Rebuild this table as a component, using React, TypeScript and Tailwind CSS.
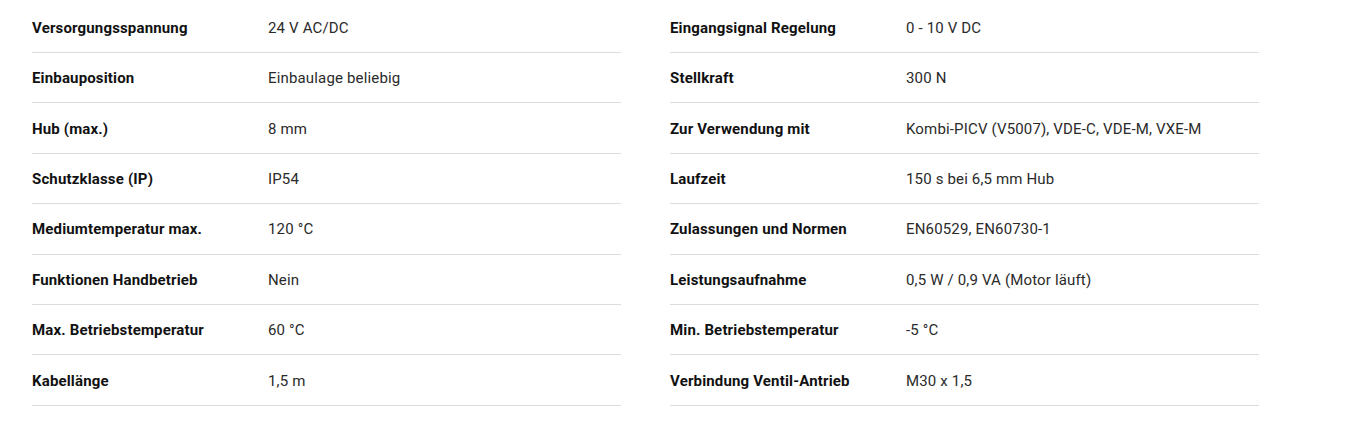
import React from "react";

const left: [string, string][] = [
  ["Versorgungsspannung", "24 V AC/DC"],
  ["Einbauposition", "Einbaulage beliebig"],
  ["Hub (max.)", "8 mm"],
  ["Schutzklasse (IP)", "IP54"],
  ["Mediumtemperatur max.", "120 °C"],
  ["Funktionen Handbetrieb", "Nein"],
  ["Max. Betriebstemperatur", "60 °C"],
  ["Kabellänge", "1,5 m"],
];

const right: [string, string][] = [
  ["Eingangsignal Regelung", "0 - 10 V DC"],
  ["Stellkraft", "300 N"],
  ["Zur Verwendung mit", "Kombi-PICV (V5007), VDE-C, VDE-M, VXE-M"],
  ["Laufzeit", "150 s bei 6,5 mm Hub"],
  ["Zulassungen und Normen", "EN60529, EN60730-1"],
  ["Leistungsaufnahme", "0,5 W / 0,9 VA (Motor läuft)"],
  ["Min. Betriebstemperatur", "-5 °C"],
  ["Verbindung Ventil-Antrieb", "M30 x 1,5"],
];

function Column({ rows }: { rows: [string, string][] }) {
  return (
    <div className="flex w-[589px] flex-col">
      {rows.map(([k, v]) => (
        <div
          key={k}
          className="flex h-[50.43px] items-center border-b border-[#dcdcdc] pt-[1px] text-[15px] leading-[20px] tracking-[0.16px]"
        >
          <div className="w-[236px] shrink-0 font-bold text-[#111111]">{k}</div>
          <div className="text-[#2a2a2a]">{v}</div>
        </div>
      ))}
    </div>
  );
}

export default function App() {
  return (
    <div
      className="min-h-[434px] w-[1348px] bg-white pl-[32px] pt-[2.5px]"
      style={{ fontFamily: "Roboto, 'Liberation Sans', sans-serif" }}
    >
      <div className="flex gap-[49px]">
        <Column rows={left} />
        <Column rows={right} />
      </div>
    </div>
  );
}
